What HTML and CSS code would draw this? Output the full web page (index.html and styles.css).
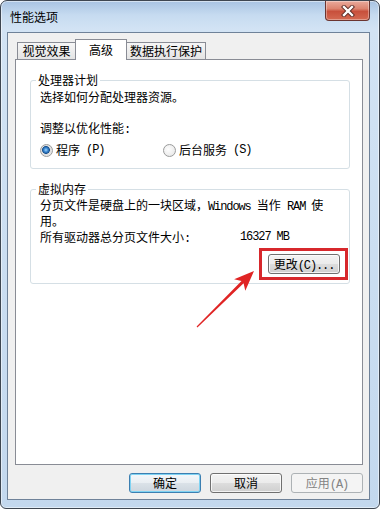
FILE: index.html
```html
<!DOCTYPE html>
<html lang="zh-CN">
<head>
    <meta charset="UTF-8">
    <title>性能选项</title>
    <link rel="stylesheet" href="styles.css">
</head>
<body>
    <div class="window">
        <div class="titlebar">
            <span class="title">性能选项</span>
            <span class="close">
                <svg width="14" height="12" viewBox="0 0 14 12">
                    <path d="M3 2 L11 10 M11 2 L3 10" stroke="#5a2a24" stroke-width="4.2" stroke-linecap="square"/>
                    <path d="M3 2 L11 10 M11 2 L3 10" stroke="#fff" stroke-width="2.4" stroke-linecap="square"/>
                </svg>
            </span>
        </div>

        <div class="client">
            <!-- 选项卡 -->
            <div class="tabs">
                <div class="tab t1">视觉效果</div>
                <div class="tab active">高级</div>
                <div class="tab t3">数据执行保护</div>
            </div>

            <div class="panel">
                <fieldset class="group cpu">
                    <legend>处理器计划</legend>
                    <p class="line">选择如何分配处理器资源。</p>
                    <p class="line tune">调整以优化性能<span class="mono">:</span></p>
                    <div class="radios">
                        <label class="opt first"><span class="radio on"></span>程序<span class="mono"> (P)</span></label>
                        <label class="opt"><span class="radio"></span>后台服务<span class="mono"> (S)</span></label>
                    </div>
                </fieldset>

                <fieldset class="group vm">
                    <legend>虚拟内存</legend>
                    <p class="wrap">分页文件是硬盘上的一块区域，<span class="mono">Windows </span>当作<span class="mono"> RAM </span>使<br>用。</p>
                    <div class="size">
                        <span class="size-label">所有驱动器总分页文件大小<span class="mono">:</span></span>
                        <span class="mono">16327 MB</span>
                    </div>
                    <div class="change-row">
                        <span class="mark">
                            <button class="btn">更改<span class="mono">(C)...</span></button>
                        </span>
                    </div>
                </fieldset>
            </div>

            <div class="footer">
                <button class="btn default">确定</button>
                <button class="btn">取消</button>
                <button class="btn" disabled>应用<span class="mono">(A)</span></button>
            </div>
        </div>
    </div>

    <!-- 标注箭头 -->
    <svg class="arrow" width="380" height="509" viewBox="0 0 380 509">
        <polygon fill="#e02424" points="254,271 245.3,290.7 243.6,283.3 197.4,327.4 196.6,326.6 241.5,281.1 234.1,279.3"/>
    </svg>
</body>
</html>
```

FILE: styles.css
```css
body {
    margin: 0;
    padding: 0;
    background: #fff;
    font-family: "Noto Sans CJK SC", sans-serif;
    font-size: 12px;
    color: #000;
}
p {
    margin: 0;
}
.mono {
    font-family: "Liberation Mono", monospace;
    font-size: 12px;
    letter-spacing: -1.1px;
    white-space: pre;
}
.window {
    width: 380px;
    height: 509px;
    box-sizing: border-box;
    border: 1px solid #3e4651;
    border-radius: 7px 7px 6px 6px;
    padding: 0 9px 8px 6px;
    background: linear-gradient(180deg, #a8c3e2 0, #c6dbf0 14px, #d2e3f4 28px, #c3d8ee 100%);
    box-shadow: inset 0 0 0 1px rgba(255,255,255,0.5);
}
.titlebar {
    height: 31px;
    display: flex;
    justify-content: space-between;
    align-items: flex-start;
}
.title {
    margin: 7px 0 0 3px;
    line-height: 17px;
}
.close {
    width: 45px;
    height: 20px;
    box-sizing: border-box;
    border: 1px solid #6b3530;
    border-top: none;
    border-radius: 0 0 4px 4px;
    background: linear-gradient(180deg, #e9aa9c 0, #dc8470 40%, #c8503c 55%, #d46a52 100%);
    box-shadow: inset 0 0 0 1px rgba(255,255,255,0.35);
    display: flex;
    align-items: center;
    justify-content: center;
}
.client {
    height: 468px;
    box-sizing: border-box;
    border: 1px solid #6f8299;
    background: #f0f0f0;
    padding: 6px 6px 0 7px;
}
.tabs {
    height: 20px;
    display: flex;
    align-items: flex-end;
    margin-left: 2px;
}
.tab {
    height: 17px;
    box-sizing: border-box;
    border: 1px solid #898c95;
    border-bottom: none;
    background: linear-gradient(180deg, #f6f6f6, #e4e4e4);
    line-height: 16px;
    text-align: center;
}
.t1 {
    width: 58px;
    border-right: none;
}
.t3 {
    width: 79px;
    border-left: none;
}
.tab.active {
    width: 52px;
    height: 21px;
    margin-bottom: -1px;
    padding-top: 2px;
    background: #fff;
    position: relative;
    z-index: 1;
}
.panel {
    height: 406px;
    box-sizing: border-box;
    border: 1px solid #898c95;
    background: #fff;
    padding: 13px 12px 0 14px;
}
.group {
    margin: 0;
    min-width: 0;
    border: 1px solid #d5dfe5;
    border-radius: 3px;
    padding: 2px 9px 10px 9px;
}
.group legend {
    margin-left: -4px;
    padding: 0 2px;
    line-height: 14px;
}
.line {
    line-height: 16px;
}
.tune {
    margin-top: 15px;
}
.radios {
    margin-top: 4px;
    display: flex;
    line-height: 16px;
}
.opt {
    display: flex;
    align-items: center;
}
.opt.first {
    width: 123px;
}
.radio {
    width: 11px;
    height: 11px;
    border: 1px solid #9a9b9b;
    border-radius: 50%;
    background: radial-gradient(circle at 40% 40%, #fdfdfd 0, #e4e4e4 100%);
    margin-right: 3px;
}
.radio.on {
    background: radial-gradient(circle at 45% 45%, #a4d8fb 0, #3a88d4 2px, #1b538f 3.6px, #dcdcdc 4.2px, #f7f7f7 100%);
}
.vm {
    margin-top: 13px;
    padding-bottom: 9px;
}
.wrap {
    line-height: 14px;
}
.size {
    margin-top: 2px;
    line-height: 14px;
    display: flex;
}
.size-label {
    width: 200px;
}
.change-row {
    margin-top: 8px;
    display: flex;
    justify-content: flex-end;
}
.mark {
    display: flex;
    position: relative;
}
.mark::after {
    content: "";
    position: absolute;
    top: -6px;
    bottom: -6px;
    left: -9px;
    right: -8px;
    border: 3px solid #d7282c;
}
.btn {
    width: 72px;
    height: 20px;
    box-sizing: border-box;
    padding: 0;
    border: 1px solid #707070;
    border-radius: 3px;
    background: linear-gradient(180deg, #f3f3f3 0, #ebebeb 50%, #dddddd 51%, #cfcfcf 100%);
    box-shadow: inset 0 0 0 1px rgba(255,255,255,0.75);
    font-family: "Noto Sans CJK SC", sans-serif;
    font-size: 12px;
    line-height: 18px;
    color: #000;
}
.btn.default {
    border-color: #3c7fb1;
    background: linear-gradient(180deg, #f4f8fb 0, #e9eef2 50%, #dbe2e8 51%, #cdd6de 100%);
    box-shadow: inset 0 0 0 1px #7fd3f3;
}
.btn:disabled {
    border-color: #adb2b5;
    background: #f4f4f4;
    box-shadow: none;
    color: #838383;
}
.footer {
    margin-top: 8px;
    display: flex;
    justify-content: flex-end;
    gap: 9px;
}
.arrow {
    position: absolute;
    left: 0;
    top: 0;
    pointer-events: none;
}
```
